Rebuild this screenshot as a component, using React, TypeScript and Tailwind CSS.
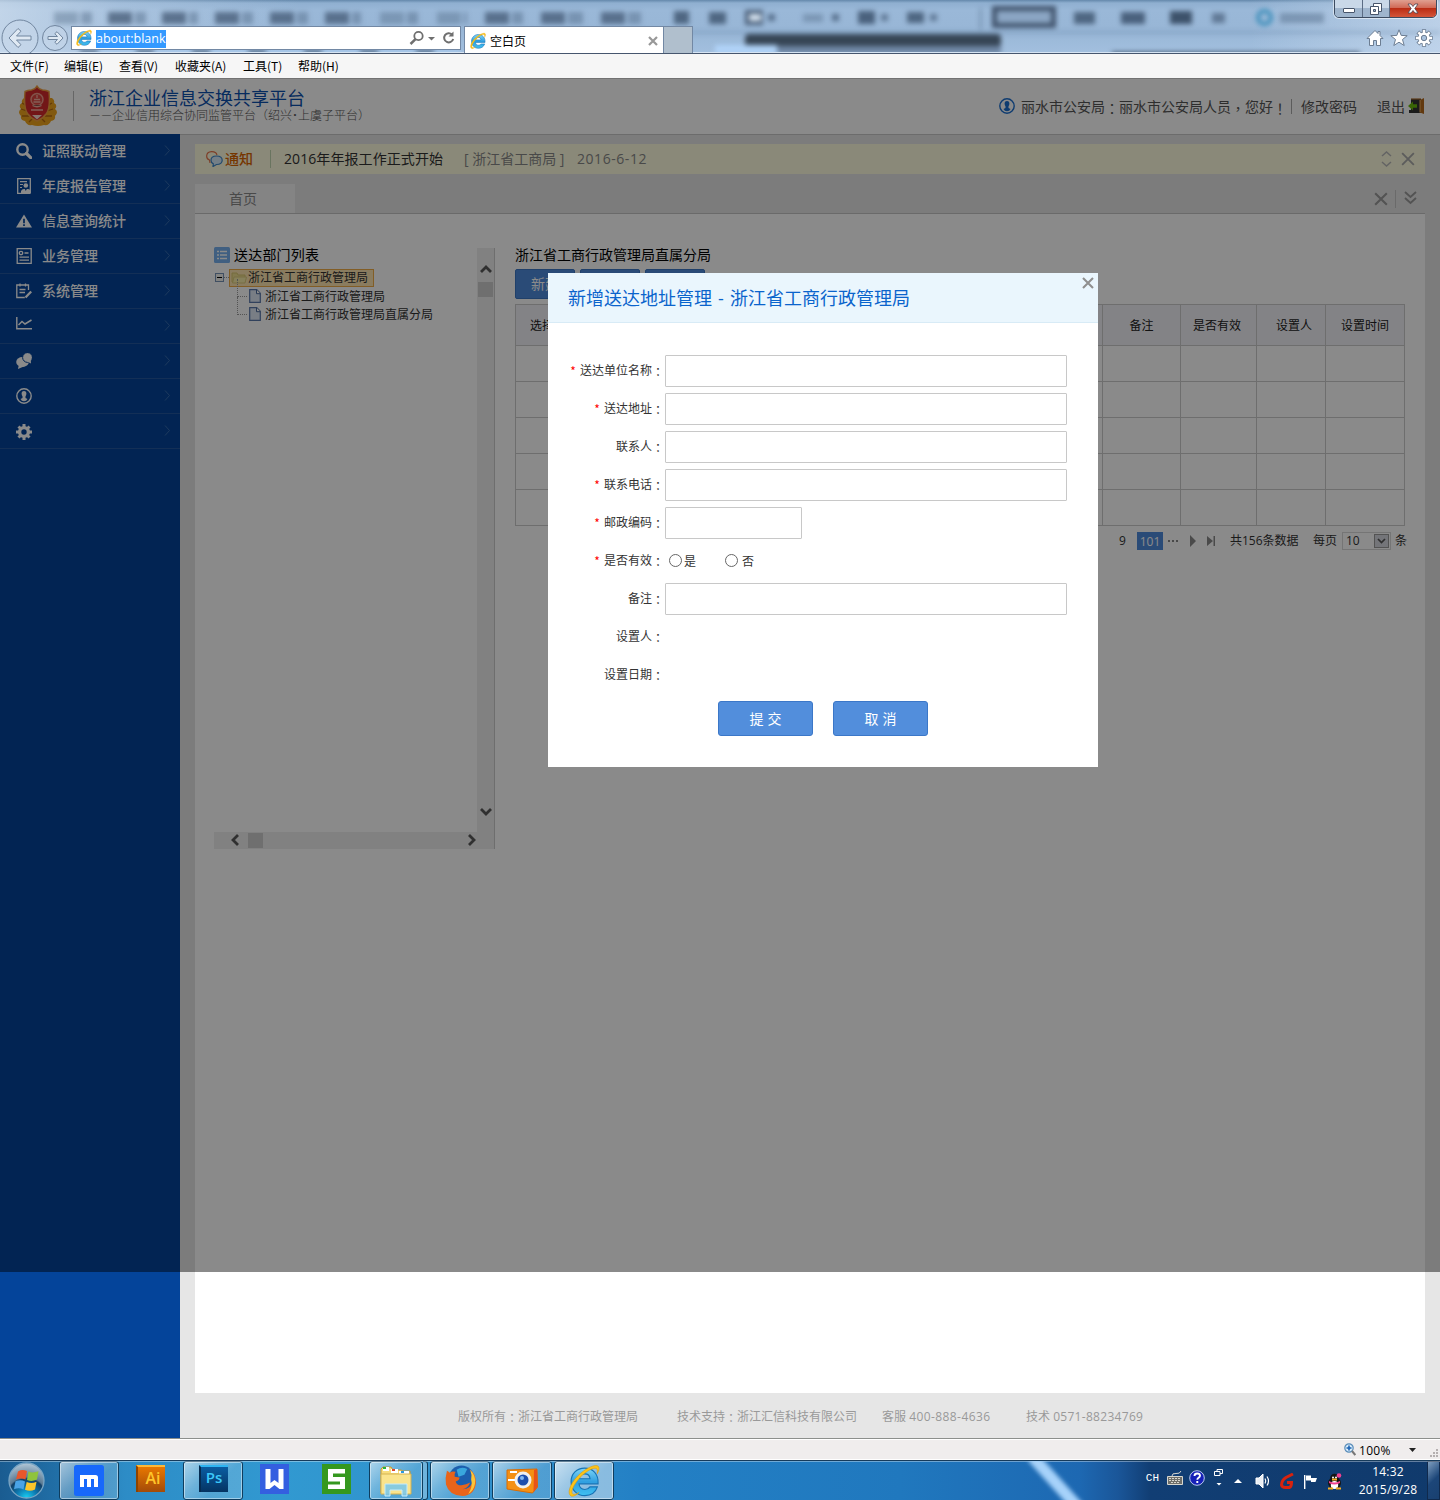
import React from "react";

const LATIN = 'font-["Open_Sans","Noto_Sans_CJK_SC",sans-serif]';

/** Full-width punctuation, centred in its em box. */
function P({ children }: { children: React.ReactNode }) {
  return <span className="align-[-1.5px] font-['Noto_Sans_CJK_TC',sans-serif] leading-none">{children}</span>;
}

function IELogo({ size }: { size: number }) {
  return (
    <svg width={size} height={size} viewBox="0 0 32 32" className="shrink-0">
      <defs>
        <linearGradient id="ieBlue" x1="0" y1="0" x2="0" y2="1">
          <stop offset="0" stopColor="#7fd6f8" />
          <stop offset="0.5" stopColor="#2f9fe0" />
          <stop offset="1" stopColor="#3fc0f2" />
        </linearGradient>
      </defs>
      <path
        d="M16.5 4.5C9.6 4.5 4.5 9.7 4.5 16.6S9.6 29 16.7 29c5.2 0 9.600-3 11.200-7.800h-6.600c-1 1.500-2.500 2.300-4.500 2.300-3 0-5-1.800-5.200-5h16.900c.6-8.500-4.500-14-12-14zM11.700 14c.5-2.700 2.300-4.300 4.900-4.300 2.700 0 4.500 1.600 4.800 4.300z"
        fill="url(#ieBlue)" stroke="#1673b5" strokeWidth="1"
      />
      <path d="M5 29.500C.5 28 3 19 10.500 11.500 17 4.800 26.500.3 28.800 3c1.200 1.500.4 4-1 6.500.3-2.500.2-4.200-1-4.700-2.700-1-9 2.500-14.300 8C6.500 19.200 3.600 26.500 6.200 27.700c1.300.6 3.300-.2 5.500-1.500-2.400 2.200-5 3.800-6.700 3.300z" fill="#fcc419" stroke="#e09a05" strokeWidth=".5" />
    </svg>
  );
}

const blurredMenus = [
  [54, 38], [108, 38], [162, 36], [215, 38], [270, 38], [325, 36], [380, 38], [437, 30], [485, 38], [541, 42], [601, 40],
];

function BrowserChrome() {
  return (
    <div className="relative h-[54px] shrink-0 overflow-hidden border-b border-[#46566e] bg-[linear-gradient(180deg,#6488ab_0px,#8fafd0_3px,#9ab8d8_10px,#98b6d6_30px,#a3c0df_54px)]">
      <div className="absolute inset-0 bg-[linear-gradient(90deg,rgba(215,228,242,.65)_0px,rgba(190,210,232,.4)_120px,transparent_300px,transparent_1250px,rgba(210,225,243,.6)_1440px)]" />
      <div className="absolute inset-0 blur-[2.5px]">
        {blurredMenus.map(([x, w], i) => (
          <div key={x} className="absolute top-[12px] flex h-[12px] gap-[3px]" style={{ left: x, width: w }}>
            <span className={i === 0 || i === 6 || i === 7 ? "w-[24px] bg-[#4e6683]/40" : "w-[24px] bg-[#3d536e]/70"} />
            <span className="flex-1 bg-[#4e6683]/45" />
          </div>
        ))}
        <div className="absolute left-[674px] top-[11px] h-[13px] w-[15px] bg-[#3c526d]/80" />
        <div className="absolute left-[709px] top-[12px] h-[12px] w-[17px] bg-[#3c526d]/80" />
        <div className="absolute left-[745px] top-[10px] h-[15px] w-[18px] border-4 border-r-2 border-[#3c526d]/90 bg-[#d5e2ef]" />
        <div className="absolute left-[768px] top-[14px] size-[7px] bg-[#3c526d]/70" />
        <div className="absolute left-[803px] top-[14px] h-[8px] w-[20px] bg-[#4e6683]/40" />
        <div className="absolute left-[832px] top-[14px] size-[7px] bg-[#3c526d]/70" />
        <div className="absolute left-[858px] top-[11px] h-[13px] w-[17px] bg-[#3c526d]/85" />
        <div className="absolute left-[881px] top-[14px] size-[7px] bg-[#3c526d]/60" />
        <div className="absolute left-[907px] top-[12px] h-[11px] w-[17px] bg-[#3c526d]/80" />
        <div className="absolute left-[930px] top-[14px] size-[7px] bg-[#3c526d]/60" />
        <div className="absolute left-[980px] top-[8px] h-[22px] w-px bg-[#4e6683]" />
        <div className="absolute left-[992px] top-[6px] h-[22px] w-[64px] border-[5px] border-[#41546d] bg-[#8ba6c4]" />
        <div className="absolute left-[1074px] top-[12px] h-[12px] w-[21px] bg-[#3c526d]/80" />
        <div className="absolute left-[1121px] top-[12px] h-[12px] w-[24px] bg-[#3c526d]/85" />
        <div className="absolute left-[1170px] top-[11px] h-[13px] w-[22px] bg-[#33475f]/90" />
        <div className="absolute left-[1212px] top-[13px] h-[10px] w-[13px] bg-[#3c526d]/60" />
        <div className="absolute left-[1256px] top-[9px] size-[17px] rounded-full border-4 border-[#3f8fbb]" />
        <div className="absolute left-[1280px] top-[13px] h-[10px] w-[44px] bg-[#4e6683]/45" />
        <div className="absolute left-[664px] top-[32px] h-px w-[776px] bg-[#6486aa]" />
        <div className="absolute left-[745px] top-[34px] h-[13px] w-[256px] rounded bg-[#364555]" />
        <div className="absolute left-[745px] top-[46px] h-[8px] w-[256px] bg-[#6f87a5]" />
        <div className="absolute left-[715px] top-[45px] h-[9px] w-[62px] bg-[#b0d3f8]" />
        <div className="absolute left-[1112px] top-[52px] h-[4px] w-[248px] bg-[#40536b]" />
        <div className="absolute left-[80px] top-[50px] h-[4px] w-[380px] bg-[repeating-linear-gradient(90deg,#4d6582_0_18px,#a9cbf0_18px_56px)]" />
      </div>
      <div className="absolute inset-x-0 bottom-0 h-px bg-[#d6e4f3]" />

      <div className="absolute left-[1px] top-[19px] flex h-[34px] items-start">
        <svg width="70" height="34" viewBox="0 0 70 34" fill="none">
          <circle cx="19" cy="19" r="18" fill="#c6d7e9" fillOpacity=".55" stroke="#71869f" />
          <circle cx="54" cy="19" r="12.500" fill="#c6d7e9" fillOpacity=".55" stroke="#71869f" />
          <path d="M8 19l9-9.500 3 2.700L15.500 17H30v4H15.500l4.500 4.700-3 2.800z" fill="#dfe9f3" stroke="#71869f" />
          <path d="M62 19l-6-6.300-2.200 2 2.700 2.800H47v3h9.500l-2.700 2.800 2.200 2z" fill="#dfe9f3" stroke="#71869f" />
        </svg>
        <div className="mt-[7px] flex h-[24px] w-[390px] items-center border border-[#7288a4] bg-white pl-[3px]">
          <IELogo size={18} />
          <span className={`${LATIN} ml-[3px] mt-px h-[18px] bg-[#3399ff] text-[12.500px] leading-[18px] text-white`}>about:blank</span>
          <svg width="50" height="18" viewBox="0 0 50 18" className="ml-auto mr-[2px]" fill="none" stroke="#6f6f6f">
            <circle cx="10.500" cy="7" r="4.200" strokeWidth="1.800" />
            <path d="M7.500 10.200L2.500 15" strokeWidth="2.500" />
            <path d="M20 8h7l-3.500 3.500z" fill="#6f6f6f" stroke="none" />
            <path d="M44 5.500A4.600 4.600 0 1 0 45.200 10" strokeWidth="2" />
            <path d="M45.500 2.500v5h-5z" fill="#6f6f6f" stroke="none" />
          </svg>
        </div>
        <div className="ml-[3px] mt-[7px] flex h-[28px] w-[200px] items-center border border-b-0 border-[#7288a4] bg-white pl-[4px] pr-[5px]">
          <IELogo size={18} />
          <span className="ml-[3px] text-[12px] leading-[18px] text-black font-['Noto_Sans_CJK_SC',sans-serif]">空白页</span>
          <svg width="10" height="10" viewBox="0 0 10 10" className="ml-auto" stroke="#989898" strokeWidth="2.200"><path d="M1 1l8 8M9 1L1 9" /></svg>
        </div>
        <div className="mt-[7px] h-[28px] w-[29px] border border-b-0 border-l-0 border-[#7288a4] bg-[#b0bfcd]" />
      </div>

      <div className="absolute left-[1334px] top-[-1px] flex h-[19px] w-[103px] overflow-hidden rounded-b-[5px] border border-[#3c4b60] shadow-[0_0_0_1px_rgba(255,255,255,.5)]">
        <div className="flex w-[28px] items-end justify-center border-r border-[#5b6c84] bg-[linear-gradient(#c9d8e8_50%,#9fb5cd_50%)] pb-[4px]">
          <span className="h-[5px] w-[12px] rounded-[1px] border border-[#47556b] bg-white" />
        </div>
        <div className="flex w-[27px] items-center justify-center border-r border-[#5b6c84] bg-[linear-gradient(#c9d8e8_50%,#9fb5cd_50%)]">
          <svg width="12" height="12" viewBox="0 0 12 12" stroke="#47556b" fill="#fff"><path d="M3.500.5h8v8h-8z" /><path d="M.5 3.500h8v8h-8z" /><path d="M3.500 6.500h2v2h-2z" fill="#9fb5cd" /></svg>
        </div>
        <div className="flex flex-1 items-center justify-center bg-[linear-gradient(#e0a090_0%,#cf6450_50%,#bb2d14_50%,#d3553a_100%)]">
          <svg width="12" height="11" viewBox="0 0 12 11"><path d="M1 1h3l2 2.500L8 1h3L7.800 5.500 11 10H8L6 7.500 4 10H1l3.200-4.500z" fill="#fff" stroke="#4c4450" strokeWidth=".8" /></svg>
        </div>
      </div>

      <div className="absolute left-[1366px] top-[29px] flex gap-[6px]">
        <svg width="18" height="18" viewBox="0 0 18 18"><path d="M9 1.500L1 9.500h2.500v7H7.500v-5h3v5h4v-7H17L14 6.500v-4h-2v2z" fill="#fff" stroke="#6c7d92" /></svg>
        <svg width="18" height="18" viewBox="0 0 18 18"><path d="M9 .8l2.200 5.600 6 .3-4.700 3.800 1.700 6L9 13.200l-5.200 3.300 1.700-6L.8 6.700l6-.3z" fill="#fff" stroke="#6c7d92" /></svg>
        <svg width="18" height="18" viewBox="0 0 18 18" className="ml-px" fill="none">
          <path d="M9 .3v17.400M.3 9h17.400M2.900 2.900l12.200 12.200M15.100 2.900L2.900 15.100" stroke="#6c7d92" strokeWidth="4.200" />
          <circle cx="9" cy="9" r="6.300" fill="#6c7d92" />
          <path d="M9 1v16M1 9h16M3.400 3.400l11.200 11.200M14.600 3.400L3.400 14.600" stroke="#fff" strokeWidth="2.500" />
          <circle cx="9" cy="9" r="5.600" fill="#fff" />
          <circle cx="9" cy="9" r="2.700" fill="#a9c2dd" stroke="#6c7d92" />
        </svg>
      </div>
    </div>
  );
}

const menus = [["文件(F)", 54], ["编辑(E)", 55], ["查看(V)", 56], ["收藏夹(A)", 68], ["工具(T)", 55], ["帮助(H)", 55]] as const;

function MenuBar() {
  return (
    <div className="flex h-[25px] shrink-0 items-center border-b border-[#727272] bg-[#f6f6f6] pl-[10px] text-[12px] leading-[18px] text-black">
      {menus.map(([m, w]) => (
        <span key={m} className="whitespace-nowrap font-['Noto_Sans_CJK_SC',sans-serif]" style={{ width: w }}>{m}</span>
      ))}
    </div>
  );
}

function Emblem() {
  return (
    <svg width="40" height="42" viewBox="0 0 40 42">
      <path d="M6 13q-3 2-2 5-4 2-1 6-4 3 0 7-1 4 4 5 2 5 7 4 6 2 12 0 5 1 7-4 5-1 4-5 4-4 0-7 3-4-1-6 1-3-2-5z" fill="#f0a51c" />
      <path d="M4 18l5 3M3 24l6 2M4 31l7 0M34 18l-5 3M35 24l-6 2M34 31l-7 0M11 37l4-4M27 37l-4-4" stroke="#b56a12" strokeWidth="1.300" />
      <path d="M19 1q2 3.500 5.500 4 4 .3 6.500 1.500 1.500 16-2.500 22-3.500 5-9.500 7.500-6-2.500-9.500-7.500Q5.500 22.500 7 6.500 9.500 5.300 13.500 5 17 4.500 19 1z" fill="#d22a2c" stroke="#f0a040" strokeWidth="1.400" />
      <circle cx="19" cy="14.500" r="6" fill="#da4540" stroke="#f09a88" strokeWidth="1.500" />
      <path d="M15.500 17h7M16 14.500h6M19 10v3M14.500 20.500q4.500 2.500 9 0M13 25h12" stroke="#f3b0a0" strokeWidth="1.300" />
      <path d="M14 30h10l-5 4.500z" fill="#f7dcd0" />
    </svg>
  );
}

function UserCircle({ color, size = 16 }: { color: string; size?: number }) {
  return (
    <svg width={size} height={size} viewBox="0 0 16 16" className="shrink-0">
      <circle cx="8" cy="8" r="7.200" fill="none" stroke={color} strokeWidth="1.400" />
      <path d="M8 3C6.300 3 5.500 4.200 5.600 5.700c.1 1.100.4 1.900.9 2.500v1.700l-2 1.100Q5.500 13.200 8 13.200t3.500-2.200l-2-1.100V8.200c.5-.6.8-1.400.9-2.500C10.500 4.200 9.700 3 8 3z" fill={color} />
    </svg>
  );
}

function PageHeader() {
  return (
    <header className="flex h-[55px] shrink-0 bg-white">
      <div className="ml-[18px] mt-[6px] w-[40px]"><Emblem /></div>
      <div className="ml-[15px] mt-[12px] h-[30px] w-px bg-[#bcbcbc]" />
      <div className="ml-[15px] whitespace-nowrap">
        <h1 className="mt-[7px] text-[18px] leading-[22px] text-[#0c50ae]">浙江企业信息交换共享平台</h1>
        <div className="flex text-[12px] font-light leading-[14px] text-[#555]">
          <span className="w-[23px] tracking-[-0.5px]">－－</span><span>企业信用综合协同监管平台</span><span>（绍兴</span><span className="w-[6px] text-center font-['Open_Sans',sans-serif] font-bold">·</span><span>上虞子平台）</span>
        </div>
      </div>
      <div className="ml-auto mr-[15px] flex h-[54px] items-center whitespace-nowrap text-[14px] leading-[20px] text-[#555]">
        <UserCircle color="#1c6fd0" />
        <span className="ml-[6px] h-[21px]">丽水市公安局<P>：</P>丽水市公安局人员<P>，</P>您好<P>！</P></span>
        <span className="ml-[4px] h-[15px] w-px bg-[#aaa]" />
        <span className="ml-[9px] h-[21px]">修改密码</span>
        <span className="ml-[20px] h-[21px]">退出</span>
        <svg width="17" height="16" viewBox="0 0 17 16" className="ml-[3px]">
          <path d="M3 1h10v14H1v-3h2z" fill="#333" />
          <path d="M3 1h10" stroke="#a86a2c" strokeWidth="1.200" />
          <path d="M12 2l4-2v16l-4-1.500z" fill="#b5691c" /><path d="M12 2v12.500" stroke="#f0b060" />
          <path d="M0 8l5-4.500v2.800h4v3.400H5v2.800z" fill="#69b90c" />
        </svg>
      </div>
    </header>
  );
}

const icons: React.ReactNode[] = [
  <svg key="s" width="16" height="16" viewBox="0 0 16 16" fill="none" stroke="#fff"><circle cx="6.500" cy="6.500" r="5.200" strokeWidth="2.400" /><path d="M10.500 10.500l4.200 4.200" strokeWidth="3.200" strokeLinecap="round" /></svg>,
  <svg key="r" width="16" height="16" viewBox="0 0 16 16" fill="none" stroke="#fff"><path d="M5 15.300H1.700V.7h12.600v14.600" strokeWidth="1.300" /><path d="M4 3.700h7M4 6.500h3M4 9.500h2" strokeWidth="1.200" /><circle cx="9.800" cy="7.500" r="2.300" fill="#fff" stroke="none" /><path d="M5 16v-3q1-2 3-2h.8l1 2 1-2h1.200q2 0 2.500 2v3z" fill="#fff" stroke="none" /></svg>,
  <svg key="w" width="16" height="16" viewBox="0 0 16 16"><path d="M8 1.500L16 14.500H0z" fill="#fff" /><path d="M8 5.800v4.400M8 11.200v1.800" stroke="#04449a" strokeWidth="1.700" /></svg>,
  <svg key="b" width="16" height="16" viewBox="0 0 16 16" fill="none" stroke="#fff"><path d="M1.200.7h14v14.600h-14z" strokeWidth="1.300" /><circle cx="5" cy="5" r="1.700" strokeWidth="1.300" /><path d="M8.500 5h4M3.500 9.200h9.500M3.500 12.200h9.500" strokeWidth="1.300" /></svg>,
  <svg key="y" width="16" height="16" viewBox="0 0 16 16" fill="none" stroke="#fff"><path d="M12.500 7V2H.8v12.500h8" strokeWidth="1.300" /><path d="M4 .5v3M9.500 .5v3M3.500 6.500h6M3.500 9.500h5.500" strokeWidth="1.300" /><path d="M9.500 14.500L15.200 8.500" strokeWidth="2.300" /></svg>,
  <svg key="c" width="16" height="16" viewBox="0 0 16 16" fill="none" stroke="#fff"><path d="M.8 1v11.700H16" strokeWidth="1.400" /><path d="M2.500 9l3.500-3.500 3 2.500L15.500 4" strokeWidth="1.500" /></svg>,
  <svg key="m" width="16" height="16" viewBox="0 0 16 16"><ellipse cx="6.500" cy="9" rx="6.300" ry="4.900" fill="#fff" /><path d="M3 11l-1 5 7-3z" fill="#fff" /><circle cx="11.500" cy="4.500" r="4.900" fill="#fff" stroke="#04449a" strokeWidth="1" /><path d="M11 8.500l4 2-.3-4z" fill="#fff" /></svg>,
  <UserCircle key="u" color="#fff" />,
  <svg key="g" width="16" height="16" viewBox="0 0 16 16" fill="none" stroke="#fff"><circle cx="8" cy="8" r="4.400" strokeWidth="3.400" /><path d="M8 0v3M8 13v3M0 8h3M13 8h3M2.500 2.500l2 2M11.500 11.500l2 2M13.500 2.500l-2 2M4.500 11.500l-2 2" strokeWidth="3" /></svg>,
];
const labels = ["证照联动管理", "年度报告管理", "信息查询统计", "业务管理", "系统管理", "", "", "", ""];

function Sidebar() {
  return (
    <aside className="w-[180px] shrink-0 bg-[#04449a]">
      {labels.map((l, i) => (
        <div key={i} className="flex h-[35px] items-center border-b border-[#23589f] pl-[16px] pr-[9px]">
          <span className={i === 5 ? "mb-[4px]" : i === 8 ? "mt-[2px]" : ""}>{icons[i]}</span>
          <span className="mb-[2px] ml-[10px] text-[14px] font-medium leading-[20px] text-white">{l}</span>
          <svg width="7" height="11" viewBox="0 0 7 11" className="mb-px ml-auto" fill="none" stroke="#376bad"><path d="M1 .5l4.500 5L1 10.500" /></svg>
        </div>
      ))}
    </aside>
  );
}

function Close({ size, color, w }: { size: number; color: string; w: number }) {
  return <svg width={size} height={size} viewBox="0 0 12 12" stroke={color} strokeWidth={w}><path d="M1 1l10 10M11 1L1 11" /></svg>;
}

function Notice() {
  return (
    <div className="mt-[10px] flex h-[30px] shrink-0 items-center whitespace-nowrap bg-[#fffde0] pb-px pl-[11px] text-[14px] leading-[20px]">
      <svg width="17" height="16" viewBox="0 0 17 16" fill="none">
        <path d="M4 12l-.5-3Q.5 8 .7 4.800 1 1 5.500.7 10 .5 11 4" stroke="#e8744a" strokeWidth="1.200" />
        <path d="M10.500 5c3.500 0 5.700 1.700 5.700 4.300s-2.200 4.200-5.700 4.200l-3.500 2 .3-2.600Q5 11.700 5 9.300 5 5 10.500 5z" fill="#d6ebfa" stroke="#3f87c9" strokeWidth="1.200" />
      </svg>
      <span className="ml-[2px] h-[21px] font-medium text-[#d96400]">通知</span>
      <span className="ml-[17px] h-[18px] w-px bg-[#c3d6b0]" />
      <span className={`${LATIN} ml-[13px] w-[159px] tracking-[0.08px] text-[#333]`}>2016年年报工作正式开始</span>
      <span className={`${LATIN} ml-[21px] w-[102px] text-[#888]`}>[ 浙江省工商局 ]</span>
      <span className={`${LATIN} ml-[11px] tracking-[0.55px] text-[#888]`}>2016-6-12</span>
      <span className="ml-auto mr-[10px] flex items-center gap-[9px]">
        <svg width="11" height="16" viewBox="0 0 11 16" fill="none" stroke="#b8b8b8" strokeWidth="1.500"><path d="M1 5l4.500-4L10 5M1 11l4.500 4L10 11" /></svg>
        <Close size={14} color="#aaa" w={1.6} />
      </span>
    </div>
  );
}

function DocRow({ text }: { text: string }) {
  return (
    <div className="flex h-[18px] items-center pl-[23px]">
      <span className="mb-[17px] h-[18px] w-[10px] border-b border-l border-dotted border-[#999]" />
      <svg width="12" height="14" viewBox="0 0 12 14" className="ml-[2px]"><path d="M.7.7h7l3.600 3.600v9H.7z" fill="#dfe9f6" stroke="#5b78ab" strokeWidth="1.200" /><path d="M7.500.7v4h4" fill="#fff" stroke="#4d6a9c" /></svg>
      <span className="mb-px ml-[4px]">{text}</span>
    </div>
  );
}

function Chevron({ cls }: { cls: string }) {
  return <svg width="12" height="8" viewBox="0 0 12 8" className={cls} fill="none" stroke="#5a5a5a" strokeWidth="2.800"><path d="M1 7l5-5 5 5" /></svg>;
}

function Tree() {
  return (
    <div className="ml-[19px] mt-[34px] h-[601px] w-[281px]">
      <div className="flex h-full">
        <div className="flex w-[263px] flex-col">
          <div className="-mt-px flex h-[16px] items-center whitespace-nowrap text-[14px] text-black">
            <svg width="16" height="16" viewBox="0 0 16 16"><rect width="16" height="16" rx="1.500" fill="#76b0ee" /><path d="M3 4.500h2M6 4.500h7M3 8h2M6 8h7M3 11.500h2M6 11.500h7" stroke="#fff" strokeWidth="1.500" /></svg>
            <span className="mb-[2px] ml-[4px] tracking-[0.2px]">送达部门列表</span>
          </div>
          <div className="mt-[5px] whitespace-nowrap text-[12px] leading-[16px] text-[#333]">
            <div className="flex h-[19px] items-center">
              <span className="ml-px flex size-[9px] items-center justify-center border border-[#7693b5] bg-[#f2f2ee]"><span className="h-px w-[5px] bg-black" /></span>
              <span className="w-[5px] border-t border-dotted border-[#999]" />
              <span className="flex h-[18px] w-[145px] items-center border border-[#f0ad45] bg-[#ffe6b0]">
                <svg width="16" height="13" viewBox="0 0 16 13" className="ml-[1px]"><path d="M1 11V2h5l1 2h7v7z" fill="#f1df8e" stroke="#d8c672" /><path d="M1.500 12L3 6h12.500L14 12z" fill="#f8eca8" stroke="#dccb7c" /></svg>
                <span className="mb-px ml-px">浙江省工商行政管理局</span>
              </span>
            </div>
            <DocRow text="浙江省工商行政管理局" />
            <DocRow text="浙江省工商行政管理局直属分局" />
          </div>
          <div className="mt-auto flex h-[17px] items-center bg-[#efefef]">
            <Chevron cls="ml-[15px] mb-px -rotate-90" />
            <span className="ml-[7px] size-[15px] bg-[#cdcdcd]" />
            <Chevron cls="-mr-[1px] mb-px ml-auto rotate-90" />
          </div>
        </div>
        <div className="flex w-[18px] flex-col items-center border-r border-[#ccc] bg-[#efefef]">
          <Chevron cls="mt-[17px]" />
          <span className="mt-[9px] size-[15px] bg-[#cdcdcd]" />
          <Chevron cls="mb-[33px] mt-auto rotate-180" />
        </div>
      </div>
    </div>
  );
}

const cell = "border border-[#cbcbcb]";
function DataTable() {
  return (
    <div className="ml-[20px] mt-[34px] w-[890px]">
      <h2 className="-mt-[4px] h-[21px] whitespace-nowrap text-[14px] leading-[20px] text-black">浙江省工商行政管理局直属分局</h2>
      <div className="mt-[4px] flex gap-[5px]">
        {["新建", "", ""].map((b, i) => (
          <button key={i} className="h-[30px] w-[60px] rounded-[2px] border border-[#3b77c4] bg-[#4f8bdd] pb-[2px] text-[14px] leading-[20px] text-white">{b}</button>
        ))}
      </div>
      <table className="mt-[5px] w-[890px] table-fixed border-collapse text-[12px] leading-[16px] text-[#222]">
        <colgroup><col className="w-[587px]" /><col className="w-[78px]" /><col className="w-[76px]" /><col className="w-[69px]" /><col className="w-[79px]" /></colgroup>
        <thead>
          <tr className="h-[41px] bg-[#f3f3f8]">
            <th className={`${cell} pl-[14px] text-left font-normal`}>选择</th>
            <th className={`${cell} font-normal`}>备注</th>
            <th className={`${cell} pr-[3px] font-normal`}>是否有效</th>
            <th className={`${cell} pl-[6px] font-normal`}>设置人</th>
            <th className={`${cell} font-normal`}>设置时间</th>
          </tr>
        </thead>
        <tbody>
          {[0, 1, 2, 3, 4].map((r) => (
            <tr key={r} className="h-[36px]">{[0, 1, 2, 3, 4].map((c) => <td key={c} className={cell} />)}</tr>
          ))}
        </tbody>
      </table>
      <div className={`${LATIN} -mr-[2px] mt-[6px] flex h-[18px] items-center justify-end whitespace-nowrap text-[12px] leading-[18px] text-[#333]`}>
        <span>9</span>
        <span className="ml-[11px] h-[18px] w-[26px] bg-[#4f8bdd] text-center leading-[19px] text-white">101</span>
        <span className="ml-[5px] flex gap-[2px]"><i className="size-[2px] bg-[#888]" /><i className="size-[2px] bg-[#888]" /><i className="size-[2px] bg-[#888]" /></span>
        <svg width="28" height="12" viewBox="0 0 28 12" className="ml-[11px]" fill="#8a8a8a"><path d="M1 0l6 6-6 6zM18 1l6 5-6 5zM24.500 1H26v10h-1.500z" /></svg>
        <span className="ml-[13px] w-[69px]">共156条数据</span>
        <span className="ml-[14px]">每页</span>
        <span className="ml-[5px] flex h-[18px] w-[49px] items-center justify-between border border-[#d8d8d8] pl-[3px] pr-px">
          10
          <span className="flex h-[14px] w-[15px] items-center justify-center border border-[#999] bg-[#d6d8e0]">
            <svg width="9" height="6" viewBox="0 0 9 6" fill="none" stroke="#555" strokeWidth="1.700"><path d="M1 1l3.500 3.500L8 1" /></svg>
          </span>
        </span>
        <span className="ml-[4px]">条</span>
      </div>
    </div>
  );
}

function Field({ label, req, children }: { label: string; req?: boolean; children?: React.ReactNode }) {
  return (
    <div className="flex h-[38px] items-start">
      <div className="mt-[5px] h-[20px] w-[116px] whitespace-nowrap text-right text-[12px] leading-[20px] text-[#333]">
        {req && <span className="mr-[4px] align-[-1px] leading-none text-[#f00]">*</span>}{label}<P>：</P>
      </div>
      <div className="ml-px">{children}</div>
    </div>
  );
}
const Box = ({ small }: { small?: boolean }) => (
  <input className={`block h-[32px] rounded-[1px] border border-[#c8c8c8] bg-white ${small ? "w-[137px]" : "w-[402px]"}`} />
);
const Radio = () => <span className="size-[13px] rounded-full border border-[#666] bg-white" />;

function Modal() {
  return (
    <section className="absolute left-[548px] top-[194px] h-[494px] w-[550px] bg-white">
      <div className="flex h-[50px] justify-between border-b border-[#d8ebf6] bg-[#eaf6fd] pl-[20px]">
        <h2 className={`${LATIN} whitespace-pre text-[18px] leading-[51px] text-[#0a64cc]`}>新增送达地址管理<span className="inline-block w-[18px] text-center">-</span>浙江省工商行政管理局</h2>
        <span className="mr-[4px] mt-[4px]"><Close size={12} color="#8f8f8f" w={2.1} /></span>
      </div>
      <div className="pt-[32px]">
        <Field label="送达单位名称" req><Box /></Field>
        <Field label="送达地址" req><Box /></Field>
        <Field label="联系人"><Box /></Field>
        <Field label="联系电话" req><Box /></Field>
        <Field label="邮政编码" req><Box small /></Field>
        <Field label="是否有效" req>
          <div className="ml-[4px] flex h-[31px] items-center text-[12px] text-[#333]">
            <Radio /><span className="ml-[2px]">是</span><span className="w-[29px]" /><Radio /><span className="ml-[4px]">否</span>
          </div>
        </Field>
        <Field label="备注"><Box /></Field>
        <Field label="设置人" />
        <Field label="设置日期" />
      </div>
      <div className="ml-[170px] mt-[4px] flex gap-[20px]">
        {["提 交", "取 消"].map((b) => (
          <button key={b} className="h-[35px] w-[95px] rounded-[3px] border border-[#3b77c8] bg-[#528edc] pb-[2px] text-[14px] leading-[20px] text-white [word-spacing:1px]">{b}</button>
        ))}
      </div>
    </section>
  );
}

function WebPage() {
  return (
    <div className="relative flex h-[1359px] shrink-0 flex-col">
      <PageHeader />
      <div className="flex min-h-0 flex-1">
        <Sidebar />
        <main className="flex min-w-0 flex-1 flex-col border-t border-[#c8c8c8] bg-[#e6e6e6] px-[15px]">
          <div className="-mt-px" />
          <Notice />
          <div className="mt-[10px] flex h-[30px] shrink-0 items-center justify-between border-b border-[#c4c4c4]">
            <span className="h-[29px] w-[100px] bg-[#f4f4f4] pl-[34px] text-[14px] leading-[29px] text-[#888]">首页</span>
            <span className="mr-[8px] flex items-center">
              <Close size={14} color="#999" w={1.8} />
              <i className="ml-[7px] h-[18px] w-px bg-[#c4c4c4]" />
              <svg width="13" height="14" viewBox="0 0 13 14" className="mb-[2px] ml-[8px]" fill="none" stroke="#999" strokeWidth="1.900"><path d="M1 1l5.500 5L12 1M1 7l5.500 5L12 7" /></svg>
            </span>
          </div>
          <div className="flex h-[1179px] shrink-0 items-start bg-white"><Tree /><DataTable /></div>
          <footer className={`${LATIN} flex h-[46px] items-center whitespace-nowrap pl-[263px] pt-[2px] text-[12px] leading-[18px] text-[#999]`}>
            <span className="w-[180px]">版权所有<P>：</P>浙江省工商行政管理局</span>
            <span className="ml-[39px] w-[180px]">技术支持<P>：</P>浙江汇信科技有限公司</span>
            <span className="ml-[25px] w-[144px]">客服 <span className="tracking-[0.42px]">400-888-4636</span></span>
            <span>技术 <span className="tracking-[0.3px]">0571-88234769</span></span>
          </footer>
        </main>
      </div>
      <div className="absolute inset-x-0 top-0 h-[1193px] bg-black/46" />
      <Modal />
    </div>
  );
}

function StatusBar() {
  return (
    <div className="flex h-[22px] shrink-0 items-center justify-end border-t border-[#8c8f8c] bg-[#f0eded] shadow-[inset_0_1px_0_#fff,inset_0_-1px_0_#fff]">
      <svg width="12" height="13" viewBox="0 0 12 13"><circle cx="5" cy="5" r="4.200" fill="#d8ecfa" stroke="#5a8cb8" strokeWidth="1.200" /><path d="M5 2.500v5M2.500 5h5" stroke="#1b63b5" strokeWidth="1.600" /><path d="M8 8l3.300 4" stroke="#777" strokeWidth="2" /></svg>
      <span className={`${LATIN} ml-[3px] mt-[2px] w-[33px] text-[12px] leading-[18px] tracking-[0.3px] text-black`}>100%</span>
      <svg width="7" height="4" viewBox="0 0 7 4" className="ml-[17px] mt-px"><path d="M0 0h7L3.500 4z" fill="#222" /></svg>
      <svg width="9" height="9" viewBox="0 0 9 9" className="ml-[14px] mr-[1px] mt-[8px]" fill="#b5b0b0"><path d="M6 0h2v2H6zM3 3h2v2H3zM6 3h2v2H6zM0 6h2v2H0zM3 6h2v2H3zM6 6h2v2H6z" /></svg>
    </div>
  );
}

const task = "flex h-[39px] shrink-0 items-center justify-center rounded-[3px] border border-[#0f3d5e] bg-[linear-gradient(135deg,rgba(255,255,255,.6)_0%,rgba(255,255,255,.3)_35%,rgba(255,255,255,.17)_60%,rgba(255,255,255,.17)_100%)] shadow-[inset_0_0_0_1px_rgba(255,255,255,.45)]";

function Taskbar() {
  return (
    <div className="relative flex h-[40px] shrink-0 items-start overflow-hidden border-t border-[#173b5b] bg-[linear-gradient(90deg,#1a5c91_0px,#216fa7_58px,#2d8cc6_125px,#3199d1_280px,#308fcb_500px,#2380c5_640px,#2078be_900px,#1d68b2_1080px,#1a5699_1118px,#113e74_1150px,#103a6c_1440px)]">
      <div className="absolute inset-x-0 top-0 h-px bg-white/35" />
      <div className="absolute left-[1051px] top-[-14px] h-[74px] w-[12px] -rotate-[42deg] bg-[#a6d2fa] blur-[2px]" />
      <svg width="37" height="37" viewBox="0 0 37 37" className="ml-[8px] mt-[1px]">
        <defs><radialGradient id="orb" cx=".5" cy="1" r="1"><stop offset="0" stopColor="#18d2f5" /><stop offset=".3" stopColor="#0d78b0" /><stop offset=".55" stopColor="#123f66" /><stop offset=".6" stopColor="#5b7b94" /><stop offset="1" stopColor="#b3c8d8" /></radialGradient></defs>
        <circle cx="18.500" cy="18.500" r="17.500" fill="url(#orb)" stroke="#79a5c4" strokeWidth="1.300" />
        <path d="M10 9.500q4-2.500 9-.5l-1.500 8.500q-5-2-9.500 0z" fill="#e8572b" /><path d="M20.500 9.500q4.500 2 10-.2L29 17.500q-5 2.500-10 .5z" fill="#8fc43c" />
        <path d="M7.500 19.300q5-2 9.500.2l-1.500 8q-4.500-2.500-9.500-.3z" fill="#4aa3e6" /><path d="M18.700 20q5 2 9.800-.3L27 27.500q-5 2.500-10 .3z" fill="#fbc52b" />
      </svg>
      <div className={`${task} ml-[14px] w-[60px]`}>
        <svg width="30" height="31" viewBox="0 0 30 31"><rect width="30" height="31" rx="2.500" fill="#1768fb" /><path d="M6 22V10h15.500q2.500 0 2.500 2.500V22h-4v-8h-3v8h-4v-8h-3v8z" fill="#fff" /></svg>
      </div>
      <div className="ml-[17px] mt-[4px] flex h-[27px] w-[29px] items-center justify-center border-l-2 border-t-2 border-l-[#8d4300] border-t-[#ffb937] bg-[linear-gradient(#e87700,#a34b08)] pb-[3px] pl-[3px] font-['Open_Sans',sans-serif] text-[16px] font-semibold leading-none text-[#ffc52a]">Ai</div>
      <div className={`${task} ml-[18px] w-[60px] pb-[5px]`}>
        <div className="flex h-[27px] w-[29px] items-center justify-center border-l-2 border-t-2 border-l-[#052c52] border-t-[#2fb5f2] bg-[linear-gradient(#0a5ca1,#053463)] pb-[3px] font-['Open_Sans',sans-serif] text-[15px] font-semibold leading-none text-[#3cc8fa]">Ps</div>
      </div>
      <svg width="30" height="30" viewBox="0 0 30 30" className="ml-[17px] mt-[3px]"><rect width="29" height="30" fill="#345fe0" /><path d="M5.500 5h5v14l4-3 4 3V5h5v20h-4l-5-4-5 4h-4z" fill="#fff" /></svg>
      <svg width="30" height="30" viewBox="0 0 30 30" className="ml-[32px] mt-[3px]"><rect width="29" height="30" fill="#35981f" /><path d="M6 5h17v4.500H11V13h12v12H6v-4.500h12V17.500H6z" fill="#fff" /></svg>
      <div className={`${task} ml-[17px] w-[54px]`}>
        <svg width="34" height="32" viewBox="0 0 34 32">
          <path d="M2 28V4l2-2h8l2 3h8l2 1h7v22z" fill="#f8dd7c" stroke="#bf9838" /><path d="M4 2h6v4H4z" fill="#fff" /><path d="M4 2h3v2H4z" fill="#28b23b" /><path d="M12 4h7v4h-7z" fill="#fff" /><path d="M13 4h3v2h-3z" fill="#df4928" /><path d="M20 6h10v4H20z" fill="#fff" /><path d="M22 6h3v2h-3z" fill="#2999df" />
          <path d="M2 9h30v20H2z" fill="#fae48d" stroke="#d4b352" /><path d="M6 31V19h22v12h-5v-6H11v6z" fill="#7cc8e8" fillOpacity=".9" stroke="#c6ecfb" />
        </svg>
      </div>
      <div className="h-[39px] w-[5px] rounded-r-[3px] border border-l-0 border-[#0f3d5e] bg-white/30" />
      <div className={`${task} ml-[2px] w-[60px]`}>
        <svg width="31" height="31" viewBox="0 0 32 32"><circle cx="17" cy="13.500" r="13" fill="#1c5fae" /><path d="M12 5q5-4 11-1l-3 6-6 2z" fill="#39a7dd" /><path d="M2 6q2 1 3 2 2-2 6-1-2 3-1 5l5 1q0 3-4 4 1 4 6 4 5-1 9-3-2 6-8 7 9 0 11-9 1-6-4-12 7 5 7 14-1 13-14 14Q4 31 1 20 0 13 2 6z" fill="#e8641b" /><path d="M26 5q6 6 5 14-1 7-7 11 5-8 3-15 1-5-1-10z" fill="#fbc538" /></svg>
      </div>
      <div className={`${task} ml-[2px] w-[60px]`}>
        <svg width="32" height="26" viewBox="0 0 32 26"><path d="M1 2l30-1 .5 18-5 6L1 21z" fill="#f59013" stroke="#d96d05" /><path d="M28 2l3-1 .5 18-4 5z" fill="#e7521a" /><path d="M4 4h7M2 12h8" stroke="#fff" strokeWidth="2" /><circle cx="17" cy="12" r="8.500" fill="#f1f1ef" /><circle cx="17" cy="12" r="5.500" fill="#1d4fae" /><circle cx="16" cy="10" r="2" fill="#84b9f0" /></svg>
      </div>
      <div className="ml-[2px] rounded-[3px] bg-white/35"><div className={`${task} w-[60px]`}><IELogo size={36} /></div></div>

      <div className="ml-auto flex h-[39px] items-start text-white">
        <span className="mt-[9px] font-['Liberation_Mono',monospace] text-[11px] leading-[16px]">CH</span>
        <svg width="16" height="14" viewBox="0 0 16 14" className="ml-[8px] mt-[10px]" fill="none" stroke="#d7d7d0"><path d="M.5 5.500h15v8H.5z" fill="#6f6f6a" /><path d="M2 7.500h12M2 9.500h12M4 11.500h8" strokeDasharray="2 1" /><path d="M5 5q0-3 4-2.500T14 0" /></svg>
        <svg width="16" height="16" viewBox="0 0 16 16" className="ml-[6px] mt-[9px]"><circle cx="8" cy="8" r="7.300" fill="#1520b8" stroke="#b8c8ee" /><path d="M5.500 6q0-2.500 2.700-2.500T11 5.800Q11 7 9.500 7.800 8.300 8.500 8.300 9.800M8.300 11v2" fill="none" stroke="#fff" strokeWidth="1.900" /></svg>
        <svg width="10" height="17" viewBox="0 0 10 17" className="ml-[9px] mt-[8px]" fill="none" stroke="#fff"><path d="M3 3V.5h5.500v4H6M.5 2.500h5.500v4H.5z" /><path d="M2.500 14h5L5 16.500z" fill="#fff" stroke="none" /></svg>
        <svg width="8" height="4" viewBox="0 0 8 4" className="ml-[10px] mt-[18px]"><path d="M0 4h8L4 0z" fill="#fff" /></svg>
        <svg width="16" height="14" viewBox="0 0 16 14" className="ml-[13px] mt-[13px]" fill="none" stroke="#fff"><path d="M1 4h3l4-4v14l-4-4H1z" fill="#e9eef4" /><path d="M10 4.500q1.500 2.500 0 5M12 2.500q3 4.500 0 9" strokeWidth="1.200" /></svg>
        <svg width="16" height="16" viewBox="0 0 16 16" className="ml-[8px] mt-[12px]" fill="none"><path d="M14 1L7 4.500Q2.500 7.500 2.500 12q.5 2.500 4 2.500h4q2-1 2-5H8" stroke="#d8230e" strokeWidth="3" /></svg>
        <svg width="15" height="15" viewBox="0 0 15 15" className="ml-[8px] mt-[13px]"><path d="M1.700 1v14" stroke="#fff" strokeWidth="1.400" /><path d="M3 1.500h5V4h6l-1.500 4H8V6.500H3z" fill="#fff" /></svg>
        <svg width="15" height="17" viewBox="0 0 15 17" className="ml-[9px] mt-[12px]"><ellipse cx="7.500" cy="10" rx="6.500" ry="6" fill="#151515" /><circle cx="7.500" cy="5" r="4.300" fill="#151515" /><ellipse cx="7.500" cy="12" rx="3.700" ry="4" fill="#fff" /><path d="M2 8q5 3 11 0v2q-6 3-11 0z" fill="#f04090" /><circle cx="12" cy="2.500" r="2.300" fill="#f04090" /><circle cx="6" cy="4.500" r="1" fill="#fff" /><circle cx="9" cy="4.500" r="1" fill="#fff" /><path d="M5 6.500h5M1 15.500h5M9 15.500h5" stroke="#f6ad20" strokeWidth="1.800" /></svg>
        <div className={`${LATIN} ml-[15px] mt-[2px] w-[62px] text-center text-[12px] leading-[18px] tracking-[0.2px]`}><div>14:32</div><div>2015/9/28</div></div>
        <div className="ml-[8px] h-[39px] w-[13px] border border-[#102a4d] bg-[linear-gradient(135deg,#7e9dbe,#1c4679_50%,#194070)]" />
      </div>
    </div>
  );
}

export default function App() {
  return (
    <div className="flex h-[1500px] w-[1440px] flex-col overflow-hidden bg-white font-['Noto_Sans_CJK_SC',sans-serif]">
      <BrowserChrome />
      <MenuBar />
      <WebPage />
      <StatusBar />
      <Taskbar />
    </div>
  );
}
